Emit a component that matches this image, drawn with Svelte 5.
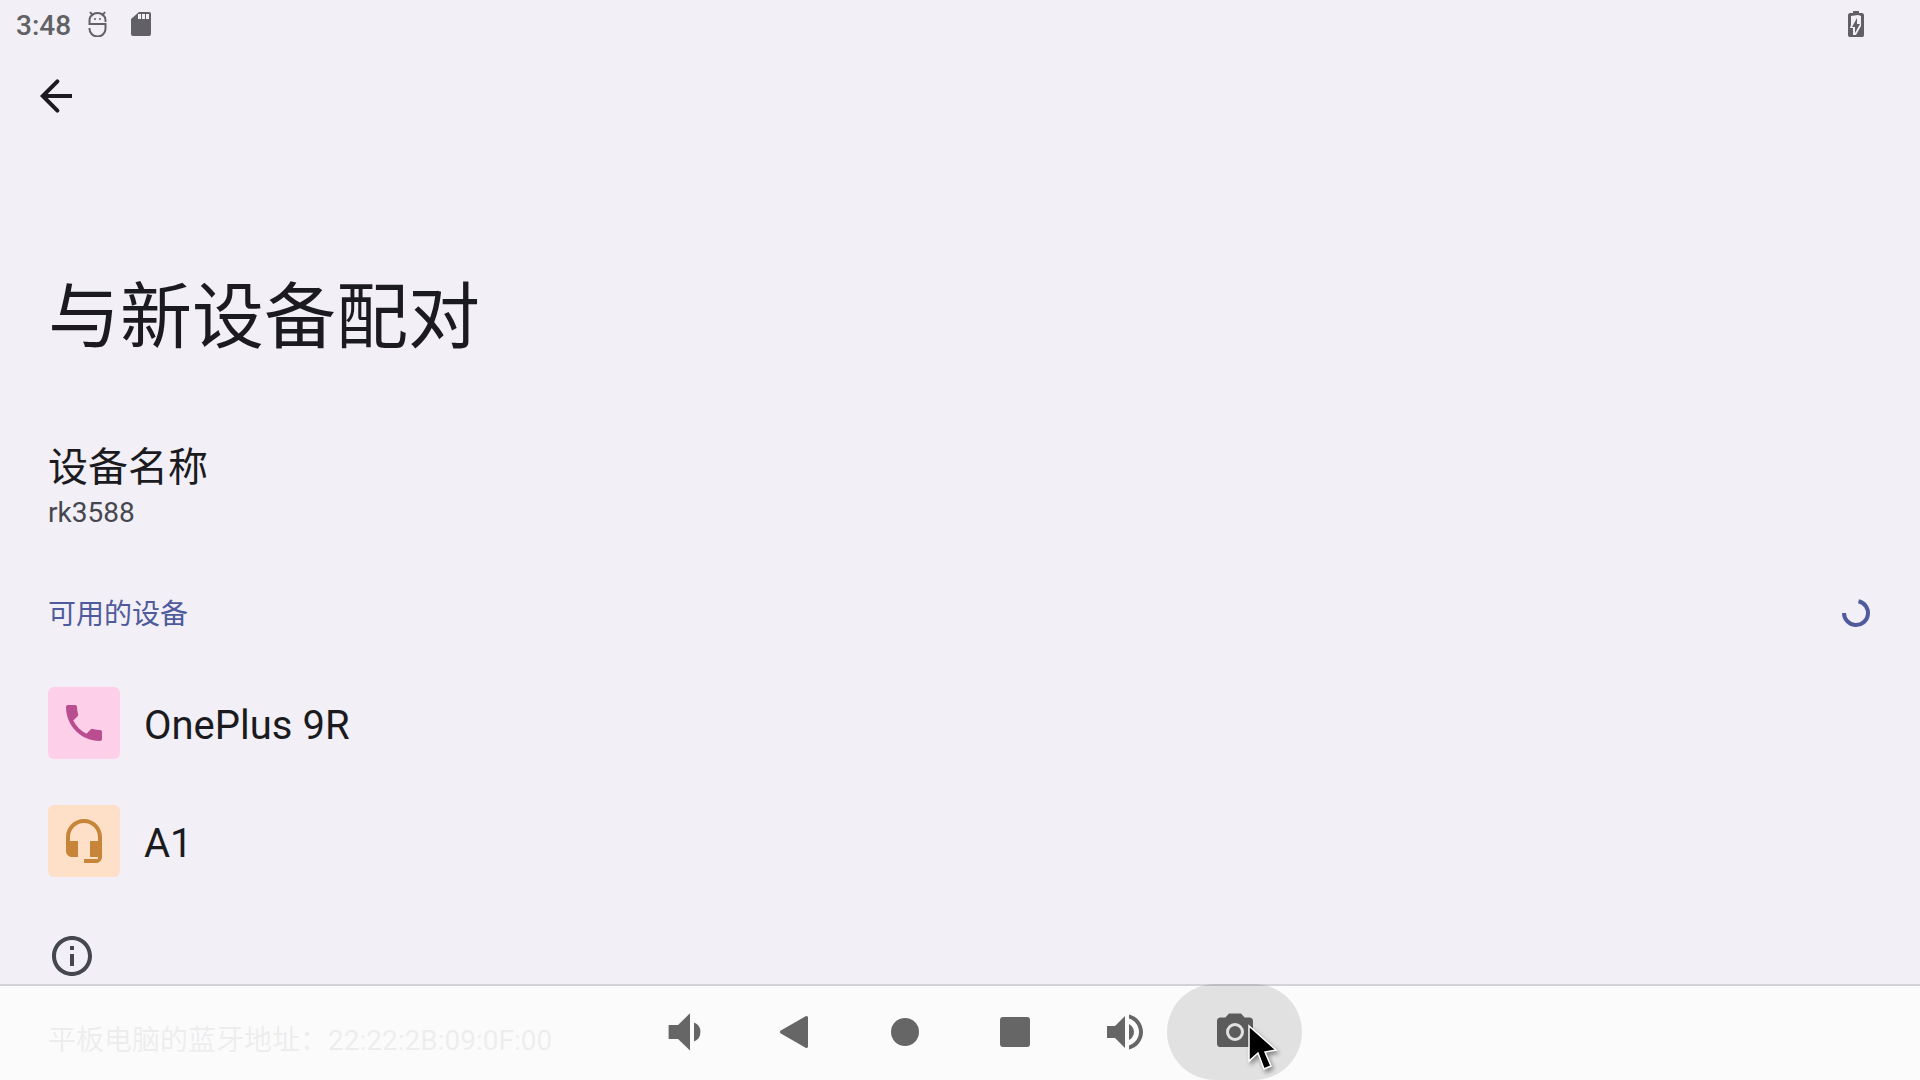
<style>
    :global(body) {
        margin: 0;
        background: #f2f0f6;
        overflow: hidden;
    }

    .screen {
        display: flex;
        flex-direction: column;
        min-height: 100vh;
        font-family: Roboto, 'Noto Sans CJK SC', sans-serif;
        color: #1b1b1f;
        background: #f2f0f6;
    }

    button {
        border: none;
        padding: 0;
        background: none;
        font: inherit;
        color: inherit;
        cursor: default;
    }

    svg {
        display: block;
        fill: currentColor;
    }

    .status-bar {
        display: flex;
        justify-content: space-between;
        align-items: center;
        height: 48px;
        padding: 0 56px 0 16px;
        color: #616064;
        font-size: 28px;
        font-weight: 500;
    }

    .status-left {
        display: flex;
        align-items: center;
        gap: 17px;
    }

    .status-left time {
        line-height: 44px;
        padding-top: 4px;
    }

    .status-icons {
        display: flex;
        gap: 24px;
    }

    .toolbar {
        display: flex;
        padding: 24px 32px 0;
    }

    h1 {
        margin: 0;
        padding: 156px 48px 0;
        font-size: 72px;
        font-weight: 400;
        line-height: 84px;
    }

    .device-name {
        display: flex;
        flex-direction: column;
        align-items: flex-start;
        gap: 3px;
        margin-top: 84px;
        padding: 0 48px;
        text-align: left;
    }

    .title {
        font-size: 40px;
        line-height: 48px;
    }

    .summary {
        font-size: 28px;
        line-height: 36px;
        color: #46464f;
    }

    .category {
        display: flex;
        justify-content: space-between;
        align-items: center;
        margin-top: 56px;
        padding: 0 48px;
        color: #4f5b9c;
    }

    h2 {
        margin: 0;
        padding-top: 4px;
        font-size: 28px;
        font-weight: 400;
        line-height: 48px;
    }

    ul {
        margin: 0;
        padding: 25px 0 0;
        list-style: none;
    }

    .device {
        display: flex;
        align-items: center;
        gap: 24px;
        width: 100%;
        height: 118px;
        padding: 0 48px;
    }

    .device .title {
        padding-top: 6px;
    }

    .tile {
        display: flex;
        align-items: center;
        justify-content: center;
        width: 72px;
        height: 72px;
        border-radius: 6px;
    }

    .phone {
        background: #fdcfe8;
        color: #b84d90;
    }

    .headset {
        background: #fedfc8;
        color: #c78539;
    }

    footer {
        padding: 32px 48px 0;
        color: #46464f;
        font-size: 28px;
    }

    footer p {
        margin: 40px 0 0;
        line-height: 42px;
    }

    .nav-bar {
        position: fixed;
        left: 0;
        right: 0;
        bottom: 0;
        display: flex;
        justify-content: center;
        height: 96px;
        box-shadow: inset 0 2px #d3d2d6;
        background: rgba(252, 252, 252, 0.92);
        color: #666666;
    }

    .nav-bar button {
        position: relative;
        display: flex;
        align-items: center;
        justify-content: center;
        width: 110px;
    }

    /* the ripple spills a little over the neighbours */
    .pressed::before {
        content: '';
        position: absolute;
        top: 0;
        bottom: 0;
        left: -13px;
        right: -12px;
        border-radius: 48px;
        background: rgba(0, 0, 0, 0.1);
    }

    .pointer {
        position: absolute;
        left: 64px;
        top: 38px;
        filter: drop-shadow(2px 3px 2px rgba(0, 0, 0, 0.4));
    }
</style>

<script>
    const deviceName = 'rk3588';
    const address = '22:22:2B:09:0F:00';

    const devices = [
        {
            name: 'OnePlus 9R',
            kind: 'phone',
            icon: 'M6.62 10.79c1.44 2.83 3.76 5.14 6.59 6.59l2.2-2.2c.27-.27.67-.36 1.02-.24 1.12.37 2.33.57 3.57.57.55 0 1 .45 1 1V20c0 .55-.45 1-1 1-9.39 0-17-7.61-17-17 0-.55.45-1 1-1h3.5c.55 0 1 .45 1 1 0 1.25.2 2.45.57 3.57.11.35.03.74-.25 1.02l-2.2 2.2z'
        },
        {
            name: 'A1',
            kind: 'headset',
            icon: 'M12 1c-4.97 0-9 4.03-9 9v7c0 1.66 1.34 3 3 3h3v-8H5v-2c0-3.87 3.13-7 7-7s7 3.13 7 7v2h-4v8h4v1h-7v2h6c1.66 0 3-1.34 3-3V10c0-4.97-4.03-9-9-9z'
        }
    ];

    const navButtons = [
        { label: '降低音量', icon: 'M3.8 8.500v7h4.700l6 5.800V2.600l-6 5.900zM16.500 7.300v9.400a4.900 4.900 0 0 0 3.200-4.700a4.900 4.900 0 0 0-3.200-4.700z' },
        { label: '返回', icon: 'M18.500 4.800v14.400a.8.8 0 0 1-1.200.7L4.900 12.700a.8.8 0 0 1 0-1.400L17.300 4.100a.8.8 0 0 1 1.200.7z' },
        { label: '主屏幕', icon: 'M12 5a7 7 0 1 0 0 14a7 7 0 1 0 0-14z' },
        { label: '概览', icon: 'M6 4.500h12a1.500 1.500 0 0 1 1.500 1.500v12a1.500 1.500 0 0 1-1.500 1.500H6A1.500 1.500 0 0 1 4.500 18V6A1.500 1.500 0 0 1 6 4.500z' },
        { label: '提高音量', icon: 'M3 9v6h4l5 5V4L7 9H3zm13.500 3c0-1.770-1.020-3.290-2.500-4.030v8.050c1.480-.730 2.500-2.250 2.500-4.020zM14 3.230v2.060c2.890.86 5 3.540 5 6.710s-2.110 5.850-5 6.710v2.060c4.010-.910 7-4.490 7-8.770s-2.990-7.860-7-8.770z' },
        { label: '截屏', icon: 'M9 2.800L7.200 4.800H4.800A1.800 1.800 0 0 0 3 6.600v11.100a1.800 1.800 0 0 0 1.800 1.800h14.400a1.800 1.800 0 0 0 1.800-1.800V6.600a1.800 1.800 0 0 0-1.800-1.800h-2.400L15 2.800zM12 7.500a4.500 4.500 0 1 1 0 9a4.500 4.500 0 1 1 0-9zM12 9a3 3 0 1 0 0 6a3 3 0 1 0 0-6z', pressed: true }
    ];
</script>

<div class="screen">
    <header class="status-bar">
        <div class="status-left">
            <time>3:48</time>
            <div class="status-icons">
                <svg width="19" height="26" viewBox="0 0 19 26">
                    <path d="M1.500 17v1a8 7.500 0 0 0 16 0v-5H1.500V9a8 7 0 0 1 16 0v2M2 1l3 4M17 1l-3 4" fill="none" stroke="currentColor" stroke-width="2" />
                    <circle cx="7" cy="8" r="1" />
                    <circle cx="12" cy="8" r="1" />
                </svg>
                <svg width="20" height="26" viewBox="0 0 20 26">
                    <path fill-rule="evenodd" d="M8 1h10a2 2 0 0 1 2 2v20a2 2 0 0 1-2 2H2a2 2 0 0 1-2-2V8zM7 3v5h3V3zm4 0v5h3V3zm4 0v5h3V3z" />
                </svg>
            </div>
        </div>
        <svg width="16" height="26" viewBox="0 0 16 26">
            <path fill-rule="evenodd" d="M5 0h6v2h3.500L16 3.500V24.500L15 26H1L0 24.500V3.500L1.500 2H5zM3 5v9l-1 3h3v7h3l5-9V5l-3-1zM9 7v6h3l-5 9v-6H4z" />
        </svg>
    </header>

    <main>
        <div class="toolbar">
            <button aria-label="返回上一页">
                <svg width="48" height="48" viewBox="0 0 24 24">
                    <path d="M12.700 4.700L5.400 12l7.300 7.300" fill="none" stroke="currentColor" stroke-width="2" stroke-linecap="round" />
                    <path d="M5 11h15v2H5z" />
                </svg>
            </button>
        </div>

        <h1>与新设备配对</h1>

        <button class="device-name">
            <span class="title">设备名称</span>
            <span class="summary">{deviceName}</span>
        </button>

        <div class="category">
            <h2>可用的设备</h2>
            <svg width="32" height="32" viewBox="0 0 32 32" role="progressbar" aria-label="正在搜索">
                <path d="M18.500 4.300A12 12 0 1 1 4 16" fill="none" stroke="currentColor" stroke-width="4" />
            </svg>
        </div>

        <ul>
            {#each devices as device}
                <li>
                    <button class="device">
                        <span class="tile {device.kind}">
                            <svg width="48" height="48" viewBox="0 0 24 24"><path d={device.icon} /></svg>
                        </span>
                        <span class="title">{device.name}</span>
                    </button>
                </li>
            {/each}
        </ul>

        <footer>
            <svg width="48" height="48" viewBox="0 0 24 24">
                <path d="M11 7h2v2h-2zm0 4h2v6h-2zm1-9C6.480 2 2 6.480 2 12s4.480 10 10 10 10-4.480 10-10S17.520 2 12 2zm0 18c-4.410 0-8-3.590-8-8s3.590-8 8-8 8 3.590 8 8-3.590 8-8 8z" />
            </svg>
            <p>平板电脑的蓝牙地址：{address}</p>
        </footer>
    </main>

    <nav class="nav-bar">
        {#each navButtons as item}
            <button class:pressed={item.pressed} aria-label={item.label}>
                <svg width="48" height="48" viewBox="0 0 24 24"><path fill-rule="evenodd" d={item.icon} /></svg>
                {#if item.pressed}
                    <svg class="pointer" width="36" height="52" viewBox="0 0 36 52">
                        <path d="M5 4v35l9-8 6 16 7-3-6-14 11-2z" fill="#000" stroke="#fff" stroke-width="1.500" />
                    </svg>
                {/if}
            </button>
        {/each}
    </nav>
</div>
